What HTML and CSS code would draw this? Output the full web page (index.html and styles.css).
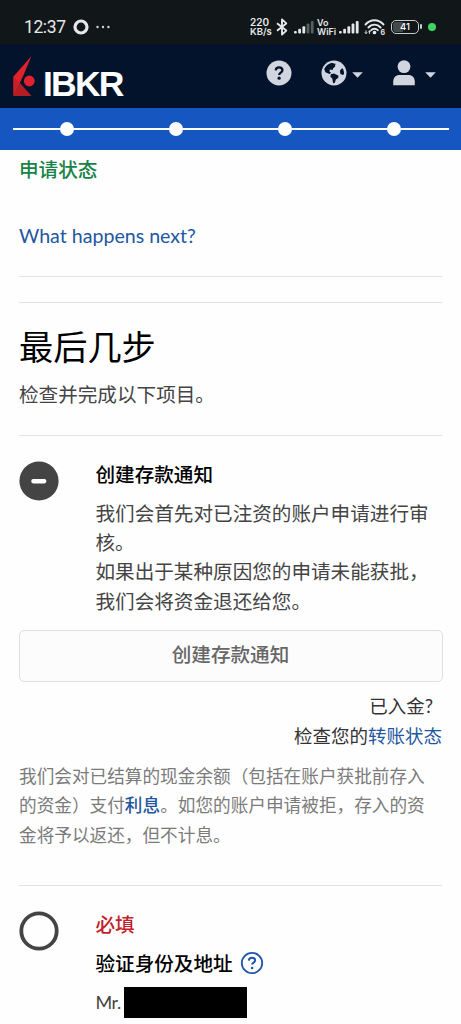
FILE: index.html
```html
<!DOCTYPE html>
<html lang="zh-CN">
<head>
<meta charset="utf-8">
<meta name="viewport" content="width=device-width, initial-scale=1">
<title>IBKR</title>
<link rel="stylesheet" href="styles.css">
</head>
<body>
<div class="statusbar">
  <span class="clock">12:37</span>
  <svg class="ring" width="16" height="16" viewBox="0 0 16 16"><circle cx="8" cy="8" r="6" fill="none" stroke="#e6e7e8" stroke-width="3.2"/></svg>
  <svg class="more" width="14" height="4" viewBox="0 0 14 4" fill="#d4d5d6"><circle cx="1.5" cy="2" r="1.2"/><circle cx="7" cy="2" r="1.2"/><circle cx="12.4" cy="2" r="1.2"/></svg>
  <span class="stack speed"><span class="speed-value">220</span><span>KB/s</span></span>
  <svg class="bluetooth" width="12" height="18" viewBox="0 0 12 18" fill="none" stroke="#e6e7e8" stroke-width="1.9" stroke-linejoin="round"><path d="M1 5.2 10.3 12.6 6 16.6V1.4l4.3 4L1 12.8"/></svg>
  <svg class="signal" width="20" height="14" viewBox="0 0 20 14" fill="#e6e7e8"><rect x="0" y="11" width="2.8" height="2.6" rx="1"/><rect x="4.2" y="8.8" width="2.8" height="4.8" rx="1"/><rect x="8.4" y="6.2" width="2.8" height="7.4" rx="1"/><g fill="#5b5e60"><rect x="12.6" y="3.5" width="2.8" height="10.1" rx="1"/><rect x="16.8" y="1" width="2.8" height="12.6" rx="1"/></g></svg>
  <span class="stack vowifi"><span>Vo</span><span>WiFi</span></span>
  <svg class="signal" width="20" height="14" viewBox="0 0 20 14" fill="#e6e7e8"><rect x="0" y="11" width="2.8" height="2.6" rx="1"/><rect x="4.2" y="8.8" width="2.8" height="4.8" rx="1"/><rect x="8.4" y="6.2" width="2.8" height="7.4" rx="1"/><rect x="12.6" y="3.5" width="2.8" height="10.1" rx="1"/><rect x="16.8" y="1" width="2.8" height="12.6" rx="1"/></svg>
  <span class="wifi">
    <svg width="21" height="16" viewBox="0 0 21 16" fill="none" stroke="#e6e7e8" stroke-width="1.9" stroke-linecap="round"><path d="M1.5 5.5C6.5-.2 14.5-.2 19.5 5.5M4.4 8.5c3.4-3.8 8.8-3.8 12.2 0M7.2 11.2c1.9-2 4.7-2 6.6 0"/><circle cx="10.5" cy="13.5" r=".9" fill="#e6e7e8"/><path d="M2 11.8v2.7m-1-1 1 1 1-1M5.5 14.5v-2.7m-1 1 1-1 1 1" stroke-width=".9"/></svg>
    <span class="wifi-gen">6</span>
  </span>
  <span class="battery"><span class="battery-level">41</span></span>
  <span class="live"></span>
</div>

<header class="navbar">
  <div class="brand">
    <svg class="brand-mark" width="22" height="41" viewBox="0 0 22 41"><path d="M18.5 0 .5 20.5V40L10.8 18.5z" fill="#e0222d"/><path d="M.5 40 7 27l11.5 13z" fill="#b51d24"/><path d="M.5 20.5V40L7 27z" fill="#c91f27"/><circle cx="16.3" cy="25" r="5.4" fill="#e0222d"/></svg>
    <span class="brand-name">IBKR</span>
  </div>
  <svg class="nav-help" width="26" height="26" viewBox="0 0 26 26"><circle cx="13" cy="13" r="12.5" fill="#d0d5df"/><path d="M9.7 10.4c.2-2 1.4-3 3.3-3s3.4 1.1 3.4 2.8c0 2.4-3.2 2.4-3.2 4.7" fill="none" stroke="#02132b" stroke-width="2.3"/><circle cx="13.1" cy="18.2" r="1.6" fill="#02132b"/></svg>
  <svg class="nav-globe" width="26" height="26" viewBox="0 0 26 26"><circle cx="13" cy="13" r="12.5" fill="#d0d5df"/><path d="M12.9 3.4 10.8 2.7C7.4 3.6 4.4 6 3.2 9l1.2 3.2 4 1.8 1.7-1.2-1.8-1.6.8-1.7 2.6.4.4-1.6 2.2-1.7-.4-1.8 1.4-.9zM9.8 14.2l3.2-.6 4.6 2.2-.5 2.2-2.2 1.6-1.1 3.2-1.7.4-.8-4.6-1.9-1.8z" fill="#02132b"/><path d="m20.7 8.6-1.8 2.2.5 3.1 2.6 1.2 1-1.1c.1-2-.4-4-1.2-5.4z" fill="#02132b"/></svg>
  <svg class="caret" width="11" height="6" viewBox="0 0 11 6"><path d="M.2.3h10.6L5.5 5.8z" fill="#d0d5df"/></svg>
  <svg class="nav-user" width="22" height="26" viewBox="0 0 22 26" fill="#d0d5df"><circle cx="11" cy="6.6" r="6.4"/><path d="M.2 25.2v-3.4c0-4 2.6-6.7 6.4-6.7h8.8c3.8 0 6.4 2.7 6.4 6.7v3.4z"/></svg>
  <svg class="caret" width="11" height="6" viewBox="0 0 11 6"><path d="M.2.3h10.6L5.5 5.8z" fill="#d0d5df"/></svg>
</header>

<div class="progress"><div class="track"><i class="dot"></i><i class="dot"></i><i class="dot"></i><i class="dot"></i></div></div>

<main class="content">
  <p class="state">申请状态</p>
  <p class="next"><a class="link">What happens next?</a></p>
  <hr class="rule rule-first">
  <hr class="rule rule-second">
  <h1 class="heading">最后几步</h1>
  <p class="lead">检查并完成以下项目。</p>
  <hr class="rule rule-steps">

  <section class="step">
    <svg class="step-icon" width="40" height="40" viewBox="0 0 40 40"><circle cx="20" cy="20" r="19.6" fill="#444"/><rect x="12.3" y="18" width="15" height="4.4" rx="1.8" fill="#fff"/></svg>
    <div class="step-body">
      <h2 class="step-title">创建存款通知</h2>
      <p class="step-text">我们会首先对已注资的账户申请进行审核。<br>如果出于某种原因您的申请未能获批，我们会将资金退还给您。</p>
    </div>
  </section>
  <button class="button">创建存款通知</button>
  <p class="funded"><span class="funded-question">已入金?</span><br>检查您的<a class="link">转账状态</a></p>
  <p class="note">我们会对已结算的现金余额（包括在账户获批前存入的资金）支付<a class="link link-strong">利息</a>。如您的账户申请被拒，存入的资金将予以返还，但不计息。</p>
  <hr class="rule rule-verify">

  <section class="step">
    <svg class="step-icon" width="40" height="40" viewBox="0 0 40 40"><circle cx="20" cy="20" r="17.7" fill="none" stroke="#444" stroke-width="3.8"/></svg>
    <div class="step-body">
      <p class="required">必填</p>
      <h2 class="verify-title">验证身份及地址
        <svg width="24" height="24" viewBox="0 0 24 24" fill="none" stroke="#1f57a8"><circle cx="12" cy="12" r="10.2" stroke-width="1.8"/><path d="M8.8 9.6c.1-1.9 1.4-2.9 3.2-2.9s3.2 1 3.2 2.6c0 2.3-3.1 2.3-3.1 4.3" stroke-width="2"/><circle cx="12.1" cy="17" r="1.3" fill="#1f57a8" stroke="none"/></svg>
      </h2>
      <p class="person"><span class="salutation">Mr.</span><span class="redacted"></span></p>
    </div>
  </section>
</main>
</body>
</html>
```
FILE: styles.css
```css
* { box-sizing: border-box; }

body {
  margin: 0;
  height: 1024px;
  overflow: hidden;
  background: #fefefe;
  color: #444;
  font: 19.6px/29.4px Lato, "Noto Sans CJK SC", sans-serif;
}

h1, h2, p { margin: 0; }

.statusbar {
  display: flex;
  align-items: center;
  height: 44px;
  padding: 10px 0 0 24px;
  background: #111619;
  color: #e6e7e8;
}
.clock { width: 42px; font: 400 17.5px/20px Roboto, sans-serif; letter-spacing: -0.4px; }
.ring { margin-left: 7px; }
.more { margin-left: 7px; }
.stack {
  display: flex;
  flex-direction: column;
  font: 600 9.5px/9px Inter, sans-serif;
}
.speed { width: 23px; margin-left: 140px; }
.speed-value { font-size: 10px; }
.bluetooth { margin-left: 3px; }
.signal { margin-left: 6px; }
.vowifi { width: 20px; margin-left: 3px; font-size: 9px; }
.vowifi + .signal { margin-left: 2px; }
.wifi { display: flex; position: relative; margin-left: 5px; }
.wifi-gen { position: absolute; right: 0; bottom: -1px; background: #111619; font: 700 7px/7px Inter, sans-serif; }
.battery {
  display: flex;
  position: relative;
  width: 28px;
  height: 14px;
  margin-left: 6px;
  padding: 1px;
  border: 1.5px solid #c9cbcc;
  border-radius: 5px;
}
.battery::after {
  content: "";
  position: absolute;
  top: 3px;
  right: -4px;
  width: 2px;
  height: 5px;
  border-radius: 1px;
  background: #c9cbcc;
}
.battery-level {
  width: 100%;
  border-radius: 3px;
  background: linear-gradient(90deg, #44494c 41%, transparent 41%);
  color: #fff;
  text-align: center;
  font: 500 9.5px/10px Inter, sans-serif;
}
.live { width: 8px; height: 8px; margin-left: 9px; border-radius: 50%; background: #3fd565; }

.navbar {
  display: flex;
  align-items: flex-start;
  height: 64px;
  padding: 12px 0 0 13px;
  background: #02132b;
}
.brand { display: flex; width: 253px; }
.brand-name {
  margin: 10px 0 0 8px;
  color: #fff;
  font: 700 35.5px/36px "Liberation Sans", sans-serif;
  letter-spacing: -1.8px;
}
.nav-help { margin-top: 4px; }
.nav-globe { margin: 4px 0 0 29px; }
.caret { margin: 16px 0 0 5px; }
.nav-user { margin: 4px 0 0 30px; }
.nav-user + .caret { margin-left: 10px; }

.progress { height: 42px; padding: 13.5px 12px 0 12.5px; background: #1656c1; }
.track {
  display: flex;
  align-items: center;
  justify-content: space-around;
  height: 14px;
  background: linear-gradient(#fff, #fff) center / 100% 2px no-repeat;
}
.dot { width: 14px; height: 14px; border-radius: 50%; background: #fff; }

.content { padding: 5px 19px 0; }
.state { color: #178347; font-weight: 500; }
.next { margin-top: 37px; }
.link { color: #1f57a0; }
.link-strong { font-weight: 500; }
.rule { margin: 0; border: 0; border-top: 1px solid #e2e2e2; }
.rule-first { margin-top: 25px; }
.rule-second { margin-top: 25px; }
.heading { margin-top: 22px; color: #000; font-size: 34.2px; font-weight: 400; line-height: 44px; }
.lead { margin-top: 11px; }
.rule-steps { margin-top: 26px; }

.step { display: flex; gap: 37px; padding-top: 24px; }
.step-icon { flex: none; margin: 0.5px 0 0 -0.5px; }
.step-title, .verify-title { color: #000; font-size: inherit; font-weight: 500; }
.step-text { margin-top: 9px; width: 346px; }
.button {
  display: block;
  width: 424px;
  height: 52px;
  margin-top: 14px;
  margin-left: -0.5px;
  padding: 0 0 3px;
  border: 1px solid #dedede;
  border-radius: 5px;
  background: #fcfcfc;
  color: #666;
  font: inherit;
  font-weight: 500;
}
.funded { margin-top: 10px; color: #333; font-size: 18.5px; text-align: right; }
.funded-question { padding-right: 9px; }
.note { width: 412px; margin-top: 11px; color: #7b7b7b; font-size: 17.65px; }
.rule-verify { margin-top: 35px; }
.required { color: #c41f2d; font-weight: 500; }
.verify-title { display: flex; align-items: center; gap: 7px; margin-top: 9px; }
.person { display: flex; align-items: center; margin-top: 9px; font-size: 18px; }
.salutation { width: 28.5px; letter-spacing: -0.5px; }
.redacted { width: 123px; height: 31px; background: #000; }
```
